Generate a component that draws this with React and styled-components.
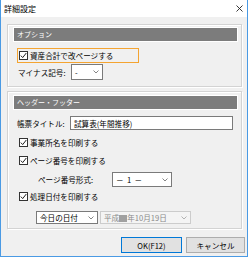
import React from 'react';
import styled, { createGlobalStyle } from 'styled-components';

const Global = createGlobalStyle`
  html, body { margin: 0; padding: 0; background: #fff; }
  body { font-family: "Noto Sans CJK JP", "Noto Sans", sans-serif; color: #000; }
  * { box-sizing: border-box; }
`;

const Window = styled.div`
  width: 248px;
  height: 257px;
  border: 1px solid #4a9ae4;
  border-top: none;
  background: #f0f0f0;
  display: flex;
  flex-direction: column;
`;

const TitleBar = styled.div`
  height: 17px;
  flex: none;
  background: #fff;
  display: flex;
  align-items: center;
  justify-content: space-between;
  padding: 0 4px 0 3px;
  font-size: 8px;
`;

const Content = styled.div`
  padding: 7px 5px 0 6px;
  display: flex;
  flex-direction: column;
`;

const GroupBox = styled.div`
  border: 1px solid #d3d3d3;
  box-shadow: inset 1px 1px 0 #fff, 1px 1px 0 #fff;
  padding: 3px 4px ${(p) => p.$pb}px 6px;
  margin-top: ${(p) => p.$mt || 0}px;
  display: flex;
  flex-direction: column;
`;

const HeaderBar = styled.div`
  height: 13px;
  background: #7c7c7c;
  box-shadow: 0 0 0 1px #fff;
  color: #fff;
  font-size: 7px;
  line-height: 13px;
  padding-left: 3px;
`;

const GroupBody = styled.div`
  padding-left: 3px;
  display: flex;
  flex-direction: column;
  font-size: 7.6px;
`;

const Row = styled.div`
  display: flex;
  align-items: center;
  height: ${(p) => p.$h}px;
  margin-top: ${(p) => p.$mt || 0}px;
  padding-left: ${(p) => p.$pl || 0}px;
  gap: ${(p) => p.$gap || 0}px;
`;

const FocusRow = styled.div`
  display: flex;
  align-items: center;
  width: 122px;
  height: 15px;
  margin-top: ${(p) => p.$mt}px;
  border: 1px solid #f4a431;
  padding-left: 1px;
  gap: 2px;
`;

const Label = styled.span`
  width: ${(p) => p.$w}px;
  flex: none;
  white-space: nowrap;
`;

const CheckRow = styled.div`
  display: flex;
  align-items: center;
  gap: 2px;
  padding-left: 2px;
  height: 14px;
  margin-top: ${(p) => p.$mt}px;
`;

const Box = styled.span`
  width: 9px;
  height: 9px;
  flex: none;
  border: 1px solid #333;
  background: #fff;
  display: flex;
  align-items: center;
  justify-content: center;
`;

const Select = styled.div`
  width: ${(p) => p.$w}px;
  height: ${(p) => p.$h}px;
  flex: none;
  border: 1px solid ${(p) => (p.$disabled ? '#cccccc' : '#7a7a7a')};
  background: ${(p) => (p.$disabled ? '#f4f4f4' : '#fff')};
  color: ${(p) => (p.$disabled ? '#8a8a8a' : '#000')};
  display: flex;
  align-items: center;
  justify-content: space-between;
  padding: 0 3px 0 3px;
  white-space: nowrap;
`;

const TextInput = styled.div`
  width: 163px;
  height: 14px;
  flex: none;
  border: 1px solid #7a7a7a;
  background: #fff;
  display: flex;
  align-items: center;
  padding-left: 3px;
`;

const ButtonRow = styled.div`
  display: flex;
  justify-content: flex-end;
  gap: 4px;
  margin-top: 8px;
  margin-right: -3px;
`;

const Button = styled.div`
  width: ${(p) => p.$w}px;
  height: 16px;
  border: 1px solid ${(p) => (p.$default ? '#0078d7' : '#adadad')};
  background: #e1e1e1;
  font-size: 7.6px;
  display: flex;
  align-items: center;
  justify-content: center;
`;

const Redact = styled.span`
  display: inline-block;
  width: 8px;
  height: 7px;
  background: #a0a0a0;
  vertical-align: middle;
`;

const Check = () => (
  <Box>
    <svg width="7" height="7" viewBox="0 0 7 7">
      <path d="M0.8 3.6 L2.7 5.6 L6.3 1" fill="none" stroke="#222" strokeWidth="1" />
    </svg>
  </Box>
);

const Chevron = ({ color = '#777' }) => (
  <svg width="6" height="4" viewBox="0 0 6 4">
    <path d="M0.5 0.5 L3 3 L5.5 0.5" fill="none" stroke={color} strokeWidth="0.9" />
  </svg>
);

const Close = () => (
  <svg width="7" height="7" viewBox="0 0 7 7">
    <path d="M0.5 0.5 L6.5 6.5 M6.5 0.5 L0.5 6.5" stroke="#222" strokeWidth="0.9" />
  </svg>
);

export default function App() {
  return (
    <>
      <Global />
      <Window>
        <TitleBar>
          <span>詳細設定</span>
          <Close />
        </TitleBar>
        <Content>
          <GroupBox $pb={6}>
            <HeaderBar>オプション</HeaderBar>
            <GroupBody>
              <FocusRow $mt={7}>
                <Check />
                <span>資産合計で改ページする</span>
              </FocusRow>
              <Row $h={16} $mt={1} $pl={1}>
                <Label $w={53}>マイナス記号:</Label>
                <Select $w={32} $h={16}>
                  <span>-</span>
                  <Chevron />
                </Select>
              </Row>
            </GroupBody>
          </GroupBox>
          <GroupBox $mt={4} $pb={4} style={{ paddingTop: 4 }}>
            <HeaderBar>ヘッダー・フッター</HeaderBar>
            <GroupBody>
              <Row $h={14} $mt={7}>
                <Label $w={53}>帳票タイトル:</Label>
                <TextInput>試算表(年間推移)</TextInput>
              </Row>
              <CheckRow $mt={5}>
                <Check />
                <span>事業所名を印刷する</span>
              </CheckRow>
              <CheckRow $mt={4}>
                <Check />
                <span>ページ番号を印刷する</span>
              </CheckRow>
              <Row $h={15} $mt={5} $pl={21}>
                <Label $w={74}>ページ番号形式:</Label>
                <Select $w={60} $h={15}>
                  <span>－&nbsp;&nbsp;1&nbsp;&nbsp;－</span>
                  <Chevron />
                </Select>
              </Row>
              <CheckRow $mt={2}>
                <Check />
                <span>処理日付を印刷する</span>
              </CheckRow>
              <Row $h={13} $mt={8} $pl={19} $gap={2}>
                <Select $w={62} $h={13}>
                  <span>今日の日付</span>
                  <Chevron />
                </Select>
                <Select $w={91} $h={13} $disabled>
                  <span>
                    平成<Redact />年10月19日
                  </span>
                  <Chevron color="#aaa" />
                </Select>
              </Row>
            </GroupBody>
          </GroupBox>
          <ButtonRow>
            <Button $w={61} $default>OK(F12)</Button>
            <Button $w={59}>キャンセル</Button>
          </ButtonRow>
        </Content>
      </Window>
    </>
  );
}
